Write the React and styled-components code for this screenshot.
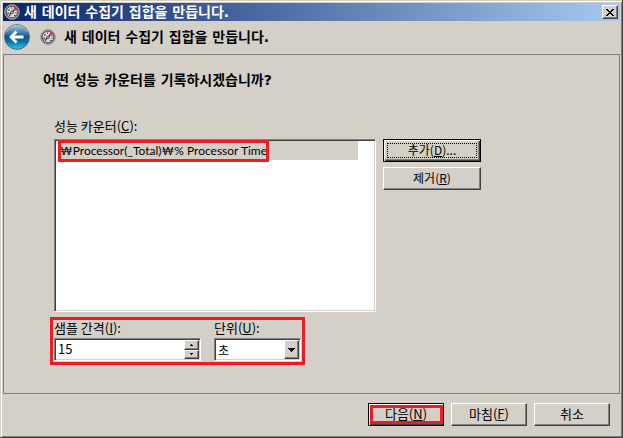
import React, { useState } from 'react'
import styled, { createGlobalStyle, css } from 'styled-components'

const GlobalStyle = createGlobalStyle`
  * {
    box-sizing: border-box;
  }

  body {
    margin: 0;
    background: #D4D0C8;
    color: #000;
    font-family: 'Noto Sans CJK KR', sans-serif;
    font-size: 12px;
  }

  button, input, select {
    font: inherit;
    color: inherit;
    border-radius: 0;
    outline: none;
    margin: 0;
  }
`

const raised = css`
  border: 1px solid;
  border-color: #FFF #404040 #404040 #FFF;
  box-shadow: inset -1px -1px #808080;
  background: #D4D0C8;
`

const sunken = css`
  border: 1px solid;
  border-color: #808080 #FFF #FFF #808080;
  box-shadow: inset 1px 1px #404040, inset -1px -1px #D4D0C8;
  background: #FFF;
  padding: 1px;
`

// DejaVu goes first for its wide spaces
const boldFace = css`
  font-family: 'DejaVu Sans', 'Noto Sans CJK KR', sans-serif;
  font-size: 14px;
  font-weight: bold;
`

const Window = styled.div`
  min-height: 100vh;
  display: flex;
  flex-direction: column;
  padding: 2px 1px 1px 2px;
  border-right: 1px solid #404040;
  border-bottom: 1px solid #404040;
  box-shadow: inset 1px 1px #D4D0C8, inset 2px 2px #FFF, inset -1px -1px #808080;
`

const Content = styled.div`
  flex: 1;
  display: flex;
  flex-direction: column;
  padding: 1px;
`

const TitleBar = styled.div`
  height: 18px;
  display: flex;
  align-items: center;
  gap: 4px;
  padding: 0 2px 0 1px;
  color: #FFF;
  background: linear-gradient(to right, #0A246A, #A6CAF0);
`

const BoldText = styled.span`
  ${boldFace}
  flex: 1;
  line-height: 18px;
`

const CloseButton = styled.button`
  ${raised}
  width: 16px;
  height: 14px;
  padding: 0;
  display: flex;
  align-items: center;
  justify-content: center;
`

const Header = styled.header`
  height: 33px;
  display: flex;
  align-items: center;
  gap: 8px;
  padding: 0 1px 2px;
`

const BackButton = styled.button`
  width: 28px;
  height: 26px;
  padding: 0;
  border: none;
  background: none;
  display: flex;
`

const Panel = styled.main`
  flex: 1;
  border: 1px solid #808080;
  padding: 15px 138px 20px 50px;
`

const Heading = styled.h1`
  ${boldFace}
  margin: 0 0 28px -11px;
  line-height: 20px;
`

const Label = styled.label`
  display: block;
  margin-bottom: 3px;
  font-size: 13px;
  line-height: 15px;
`

const Counters = styled.div`
  display: flex;
  gap: 7px;
  margin-top: 6px;
`

const ListBox = styled.div`
  position: relative;
  flex: 1;
  display: flex;
  height: 173px;
  ${sunken}
`

const List = styled.select`
  flex: 1;
  width: 100%;
  border: none;
  background: #FFF;
  padding: 0 16px 0 3px;
  overflow: hidden;
`

const ListItem = styled.option`
  min-height: 19px;
  padding: 2px 1px 0;
  font-family: Lato, 'Noto Sans CJK KR', sans-serif;
  font-size: 12px;
  line-height: 17px;
  color: #000;

  &:checked {
    color: #000;
    background: #D4D0C8 linear-gradient(#D4D0C8, #D4D0C8);
  }
`

const RowMark = styled.span`
  position: absolute;
  top: 0;
  left: 3px;
  width: 211px;
  height: 22px;
  border: 3px solid #ED1C24;
  pointer-events: none;
`

const SideButtons = styled.div`
  width: 98px;
  display: flex;
  flex-direction: column;
  gap: 5px;
`

const Button = styled.button`
  position: relative;
  ${raised}
  width: ${props => props.$wide ? '98px' : '76px'};
  height: 23px;
  padding: 0 0 2px;
  font-size: ${props => props.$wide ? '12px' : '13px'};
  line-height: 19px;

  ${props => props.$default && css`
    border-color: #000;
    box-shadow: inset 1px 1px #FFF, inset -1px -1px #404040, inset -2px -2px #808080;
  `}

  ${props => props.$focused && css`
    &::after {
      content: '';
      position: absolute;
      inset: 3px;
      border: 1px dotted #000;
    }
  `}

  ${props => props.$marked && css`
    &::after {
      content: '';
      position: absolute;
      inset: 1px 0 1px 1px;
      border: 3px solid #ED1C24;
    }
  `}
`

const Sampling = styled.div`
  width: fit-content;
  display: flex;
  gap: 13px;
  margin: 5px 0 0 -4px;
  padding: 0 1px 1px;
  border: 3px solid #ED1C24;
`

const Field = styled.div`
  width: ${props => props.$width}px;
`

const FieldBox = styled.div`
  position: relative;
  display: flex;
  height: 23px;
  ${sunken}
`

const NumberInput = styled.input`
  flex: 1;
  min-width: 0;
  border: none;
  padding: 0 2px 2px;
  background: none;
  font-size: 13px;
  appearance: textfield;

  &::-webkit-inner-spin-button {
    appearance: none;
    display: none;
  }
`

const Spinner = styled.div`
  width: 15px;
  display: flex;
  flex-direction: column;
`

const SpinButton = styled.button`
  ${raised}
  flex: 1;
  min-height: 0;
  padding: 0;
  display: flex;
  align-items: center;
  justify-content: center;
`

const UnitSelect = styled.select`
  flex: 1;
  appearance: none;
  border: none;
  background: none;
  padding: 0 18px 0 2px;
`

const DropArrow = styled.span`
  ${raised}
  position: absolute;
  top: 1px;
  right: 1px;
  bottom: 1px;
  width: 15px;
  display: flex;
  align-items: center;
  justify-content: center;
  pointer-events: none;
`

const Footer = styled.footer`
  display: flex;
  justify-content: flex-end;
  gap: 7px;
  padding: 9px 10px;
`

const GaugeIcon = ({ size = 16 }) => (
  <svg width={size} height={size} viewBox='0 0 16 16' aria-hidden='true'>
    <circle cx='8' cy='8' r='7.4' fill='#8A878C' stroke='#9A979C' />
    <circle cx='8' cy='8' r='5.8' fill='#D8D8DC' stroke='#5A5A60' />
    <path d='M10 2.6A5.8 5.8 0 0 1 13.4 7L11.4 6.6 9.8 5z' fill='#ED2832' />
    <path d='M4 10.5V8.5M4.5 6.5L5.5 5.5M7 4H8M5 11.5L6.5 10.5M10 11.5H11.5M12 9.5V8.5' stroke='#222' strokeWidth='1.1' />
    <path d='M6 10L10.4 5.6' stroke='#111' strokeWidth='1.3' />
    <circle cx='8' cy='8.4' r='1.7' fill='#55555A' />
    <circle cx='8' cy='8.4' r='.7' fill='#EEE' />
  </svg>
)

const BackIcon = () => (
  <svg width='26' height='26' viewBox='0 0 26 26' aria-hidden='true'>
    <defs>
      <linearGradient id='ball' x1='0' y1='0' x2='0' y2='1'>
        <stop offset='0' stopColor='#A9C6DA' />
        <stop offset='.3' stopColor='#4A86B2' />
        <stop offset='.5' stopColor='#0F5288' />
        <stop offset='.7' stopColor='#0B74AC' />
        <stop offset='1' stopColor='#25D2F5' />
      </linearGradient>
    </defs>
    <circle cx='13' cy='13' r='12.4' fill='url(#ball)' stroke='#3F6583' />
    <path d='M2.6 8A11.4 11.4 0 0 1 23.4 8' fill='none' stroke='#D7E4EC' strokeOpacity='.6' />
    <path d='M12.5 7.5L7 13L12.5 18.5M7.5 13H19.5' fill='none' stroke='#FFF' strokeWidth='2.8' />
  </svg>
)

const App = () => {
  const [ interval, setInterval ] = useState(15)
  const [ unit, setUnit ] = useState('초')

  const handleIntervalChange = event => setInterval(event.target.value)
  const handleUnitChange = event => setUnit(event.target.value)
  const step = amount => setInterval(Math.max(1, Number(interval) + amount))

  return (
    <Window>
      <GlobalStyle />
      <Content>
        <TitleBar>
          <GaugeIcon />
          <BoldText>새 데이터 수집기 집합을 만듭니다.</BoldText>
          <CloseButton type='button' aria-label='닫기'>
            <svg width='8' height='7' viewBox='0 0 8 7' shapeRendering='crispEdges'>
              <path d='M0 0h2v1h1v1h2v-1h1v-1h2v1h-1v1h-1v1h-1v1h1v1h1v1h1v1h-2v-1h-1v-1h-2v1h-1v1h-2v-1h1v-1h1v-1h1v-1h-1v-1h-1v-1h-1z' />
            </svg>
          </CloseButton>
        </TitleBar>

        <Header>
          <BackButton type='button' aria-label='뒤로'><BackIcon /></BackButton>
          <GaugeIcon />
          <BoldText>새 데이터 수집기 집합을 만듭니다.</BoldText>
        </Header>

        <Panel>
          <Heading>어떤 성능 카운터를 기록하시겠습니까?</Heading>
          <Label htmlFor='counters'>성능 카운터(<u>C</u>):</Label>
          <Counters>
            <ListBox>
              <List id='counters' multiple defaultValue={[ 'cpu' ]}>
                <ListItem value='cpu'>₩Processor(_Total)₩% Processor Time</ListItem>
              </List>
              <RowMark />
            </ListBox>
            <SideButtons>
              <Button type='button' $wide $default $focused>추가(<u>D</u>)...</Button>
              <Button type='button' $wide>제거(<u>R</u>)</Button>
            </SideButtons>
          </Counters>

          <Sampling>
            <Field $width={147}>
              <Label htmlFor='interval'>샘플 간격(<u>I</u>):</Label>
              <FieldBox>
                <NumberInput id='interval' type='number' value={interval} onChange={handleIntervalChange} />
                <Spinner>
                  <SpinButton type='button' aria-label='증가' onClick={() => step(1)}>
                    <svg width='3' height='2' viewBox='0 0 3 2' shapeRendering='crispEdges'><path d='M1 0h1v1h1v1h-3v-1h1z' /></svg>
                  </SpinButton>
                  <SpinButton type='button' aria-label='감소' onClick={() => step(-1)}>
                    <svg width='3' height='2' viewBox='0 0 3 2' shapeRendering='crispEdges'><path d='M0 0h3v1h-1v1h-1v-1h-1z' /></svg>
                  </SpinButton>
                </Spinner>
              </FieldBox>
            </Field>
            <Field $width={87}>
              <Label htmlFor='unit'>단위(<u>U</u>):</Label>
              <FieldBox>
                <UnitSelect id='unit' value={unit} onChange={handleUnitChange}>
                  <option>초</option>
                </UnitSelect>
                <DropArrow>
                  <svg width='7' height='4' viewBox='0 0 7 4' shapeRendering='crispEdges'><path d='M0 0h7v1h-1v1h-1v1h-1v1h-1v-1h-1v-1h-1v-1h-1z' /></svg>
                </DropArrow>
              </FieldBox>
            </Field>
          </Sampling>
        </Panel>

        <Footer>
          <Button type='button' $default $marked>다음(<u>N</u>)</Button>
          <Button type='button'>마침(<u>F</u>)</Button>
          <Button type='button'>취소</Button>
        </Footer>
      </Content>
    </Window>
  )
}

export default App
